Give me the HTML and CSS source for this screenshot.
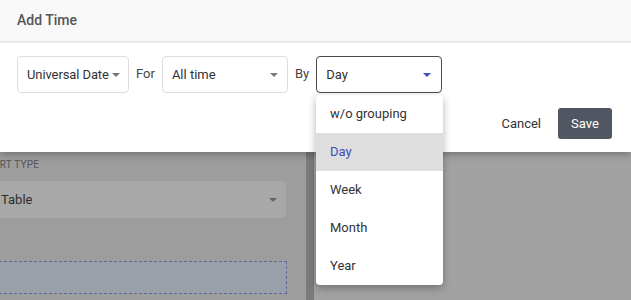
FILE: index.html
```html
<!DOCTYPE html>
<html lang="en">
<head>
  <meta charset="UTF-8">
  <meta name="viewport" content="width=device-width, initial-scale=1.0">
  <title>Add Time</title>
  <link rel="stylesheet" href="styles.css">
</head>
<body>
<div class="page">
  <div class="sidebar">
    <div class="sidebar-inner">
      <div class="field-label">Chart type</div>
      <div class="fake-select">
        <span>Table</span>
        <span class="caret caret-dim"></span>
      </div>
      <div class="drop-zone"></div>
    </div>
  </div>
  <div class="divider"></div>
  <div class="canvas"></div>
</div>

<div class="dialog">
  <div class="dialog-header">Add Time</div>
  <div class="dialog-body">
    <div class="row">
      <div class="select select-date">
        <span>Universal Date</span>
        <span class="caret"></span>
      </div>
      <span class="joiner">For</span>
      <div class="select select-range">
        <span>All time</span>
        <span class="caret"></span>
      </div>
      <span class="joiner">By</span>
      <div class="select select-group focused">
        <span>Day</span>
        <span class="caret caret-active"></span>
      </div>
    </div>
    <div class="actions">
      <button class="btn-cancel">Cancel</button>
      <button class="btn-save">Save</button>
    </div>
  </div>
</div>

<ul class="menu">
  <li>w/o grouping</li>
  <li class="selected">Day</li>
  <li>Week</li>
  <li>Month</li>
  <li>Year</li>
</ul>
</body>
</html>
```

FILE: styles.css
```css
body {
  margin: 0;
  height: 300px;
  overflow: hidden;
  font-family: Roboto, "Liberation Sans", sans-serif;
  background-color: #a2a2a2;
  color: #333;
}

/* page under the modal */
.page { display: flex; height: 300px; }
.sidebar {
  width: 306px;
  background: #9d9d9d;
  overflow: hidden;
  padding-top: 159px;
  box-sizing: border-box;
}
.sidebar-inner { margin-left: -21px; width: 307px; }
.field-label {
  font-size: 10px;
  text-transform: uppercase;
  color: #555;
  letter-spacing: 0.2px;
}
.fake-select {
  margin-top: 11px;
  height: 37px;
  box-sizing: border-box;
  width: 307px;
  padding: 0 9px 0 22px;
  background: #a8a8a8;
  border-radius: 4px;
  display: flex;
  align-items: center;
  justify-content: space-between;
  font-size: 13px;
  color: #2e2e2e;
}
.drop-zone {
  margin-top: 43px;
  height: 33px;
  width: 308px;
  box-sizing: border-box;
  border: 1px dashed #5c6794;
  background: #9aa0aa;
}
.divider { width: 8px; background: #7b7b7b; }
.canvas { flex: 1; background: #a2a2a2; }

/* modal */
.dialog {
  position: absolute;
  top: 0;
  left: 0;
  right: 0;
  height: 152px;
  background: white;
  box-shadow: 0 2px 8px rgba(0,0,0,0.3);
}
.dialog-header {
  height: 43px;
  box-sizing: border-box;
  padding: 12px 17px 0;
  background: #f8f8f8;
  border-bottom: 2px solid #e9e9e9;
  font-size: 14px;
  font-weight: 500;
  color: #555;
}
.dialog-body { padding: 13px 19px 0 17px; }
.row { display: flex; align-items: center; }
.select {
  height: 37px;
  box-sizing: border-box;
  border: 1px solid #dedede;
  border-radius: 4px;
  display: flex;
  align-items: center;
  justify-content: space-between;
  gap: 3px;
  font-size: 13px;
  color: #333;
}
.select span { white-space: nowrap; }
.select .caret { flex-shrink: 0; }
.select-date { width: 112px; padding: 0 9px 0 9px; letter-spacing: -0.1px; }
.select-range { width: 126px; padding: 0 9px 0 9px; }
.select-group { width: 126px; padding: 0 10px 0 9px; }
.select.focused { border: 1.5px solid #4a4a4a; }
.joiner { font-size: 13px; color: #444; margin: -3px 7px 0; }
.caret {
  width: 0;
  height: 0;
  border-left: 4px solid transparent;
  border-right: 4px solid transparent;
  border-top: 4px solid #777;
}
.caret-dim { border-top-color: #666; }
.caret-active { border-top-color: #3f4eb5; }

.actions {
  display: flex;
  justify-content: flex-end;
  align-items: center;
  margin-top: 15px;
  gap: 17px;
}
button { font-family: inherit; font-size: 13px; cursor: pointer; border: none; }
.btn-cancel { background: none; color: #333; padding: 0; }
.btn-save {
  width: 54px;
  height: 31px;
  background-color: #515762;
  color: white;
  border-radius: 3px;
}

/* dropdown menu */
.menu {
  position: absolute;
  left: 316px;
  top: 95px;
  width: 127px;
  margin: 0;
  padding: 0;
  list-style: none;
  background: white;
  border-radius: 4px;
  box-shadow: 0 3px 8px rgba(0,0,0,0.3);
  overflow: hidden;
}
.menu li {
  height: 38px;
  line-height: 38px;
  padding-left: 14px;
  font-size: 13px;
  color: #333;
}
.menu li.selected { background: #dedede; color: #3f4eb5; }
```
